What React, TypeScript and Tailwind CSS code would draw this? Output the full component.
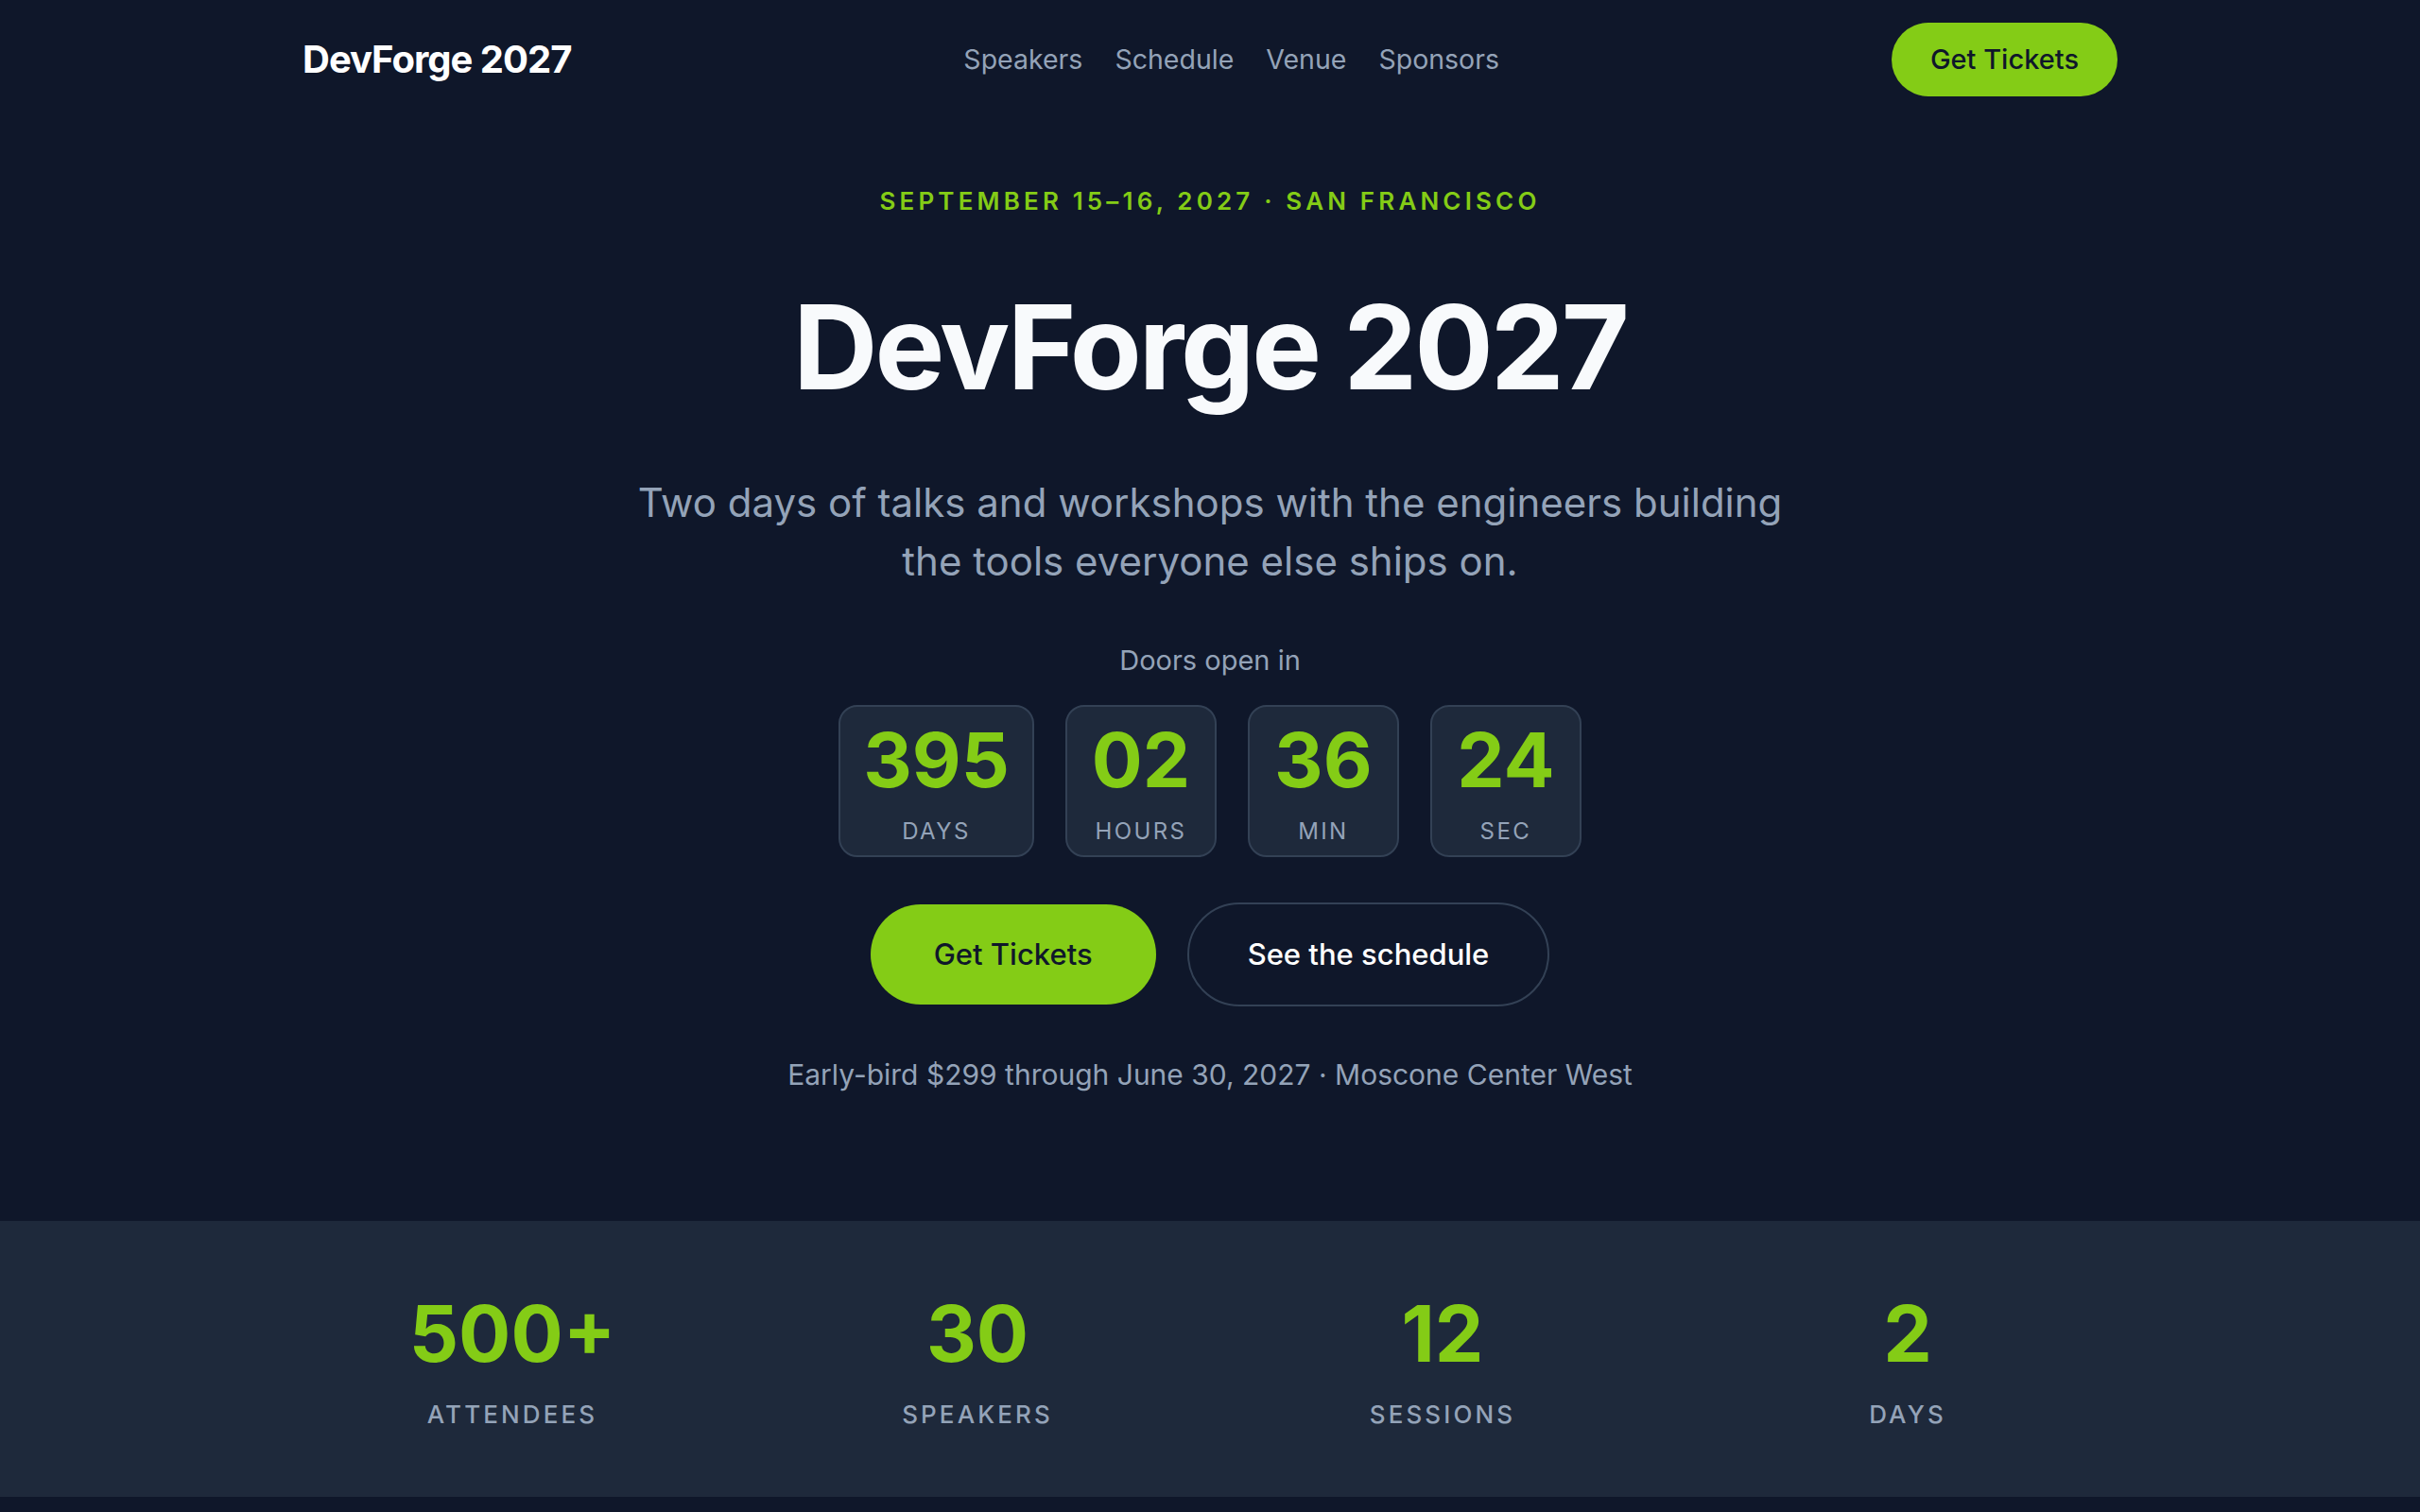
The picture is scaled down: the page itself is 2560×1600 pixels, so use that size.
import React from 'react';

const countdown = [
  { value: '395', label: 'DAYS' },
  { value: '02', label: 'HOURS' },
  { value: '36', label: 'MIN' },
  { value: '24', label: 'SEC' },
];

const stats = [
  { value: '500+', label: 'ATTENDEES' },
  { value: '30', label: 'SPEAKERS' },
  { value: '12', label: 'SESSIONS' },
  { value: '2', label: 'DAYS' },
];

const navLinks = ['Speakers', 'Schedule', 'Venue', 'Sponsors'];

export default function App() {
  return (
    <div className="min-h-screen bg-[#0f172a] font-['Inter','Noto_Sans',sans-serif] text-white">
      {/* header */}
      <header className="mx-auto flex w-[1920px] items-center justify-between py-[24px]">
        <a href="#" className="text-[40px] font-bold leading-[48px] tracking-[-0.025em] text-white">
          DevForge 2027
        </a>
        <nav className="flex items-center gap-[34px]">
          {navLinks.map((link) => (
            <a key={link} href="#" className="text-[28.5px] leading-[40px] text-[#94a3b8] hover:text-white">
              {link}
            </a>
          ))}
        </nav>
        <a
          href="#"
          className="rounded-full bg-[#84cc16] px-[41px] py-[18px] text-[29px] font-medium leading-[42px] text-[#0f172a]"
        >
          Get Tickets
        </a>
      </header>

      {/* hero */}
      <section className="flex flex-col items-center pt-[69px] pb-[134px] text-center">
        <p className="text-[26px] font-semibold leading-[36px] tracking-[0.16em] text-[#84cc16]">
          SEPTEMBER 15–16, 2027 · SAN FRANCISCO
        </p>
        <h1 className="mt-[74px] text-[124px] font-bold leading-[124px] tracking-[-0.025em] text-[#f8fafc]">
          DevForge 2027
        </h1>
        <p className="mt-[72px] max-w-[1240px] text-[42px] leading-[62px] text-[#94a3b8]">
          Two days of talks and workshops with the engineers building the tools everyone else ships on.
        </p>

        <p className="mt-[53px] text-[29px] leading-[42px] text-[#94a3b8]">Doors open in</p>
        <div className="mt-[26px] flex items-center gap-[33px]">
          {countdown.map((c) => (
            <div
              key={c.label}
              className="flex min-w-[160px] flex-col items-center rounded-[20px] border-2 border-[#334155] bg-[#1e293b] px-[24px] pt-[16px] pb-[9px]"
            >
              <span className="text-[80px] font-bold leading-[80px] text-[#84cc16]">{c.value}</span>
              <span className="mt-[20px] text-[24px] leading-[32px] tracking-[0.1em] text-[#94a3b8]">{c.label}</span>
            </div>
          ))}
        </div>

        <div className="mt-[48px] flex items-center gap-[33px]">
          <a
            href="#"
            className="rounded-full bg-[#84cc16] px-[67px] py-[31px] text-[31px] font-medium leading-[44px] text-[#0f172a]"
          >
            Get Tickets
          </a>
          <a
            href="#"
            className="rounded-full border-2 border-[#334155] px-[62px] py-[31px] text-[31px] font-medium leading-[44px] text-white"
          >
            See the schedule
          </a>
        </div>

        <p className="mt-[51px] text-[30px] leading-[42px] text-[#94a3b8]">
          Early-bird $299 through June 30, 2027 · Moscone Center West
        </p>
      </section>

      {/* stats band */}
      <section className="bg-[#1e293b] pt-[79px] pb-[69px]">
        <div className="mx-auto grid w-[1920px] grid-cols-4 gap-[48px] text-center">
          {stats.map((s) => (
            <div key={s.label} className="flex flex-col items-center">
              <span className="text-[82px] font-bold leading-[82px] text-[#84cc16]">{s.value}</span>
              <span className="mt-[26px] text-[26px] font-medium leading-[36px] tracking-[0.12em] text-[#94a3b8]">
                {s.label}
              </span>
            </div>
          ))}
        </div>
      </section>
    </div>
  );
}
